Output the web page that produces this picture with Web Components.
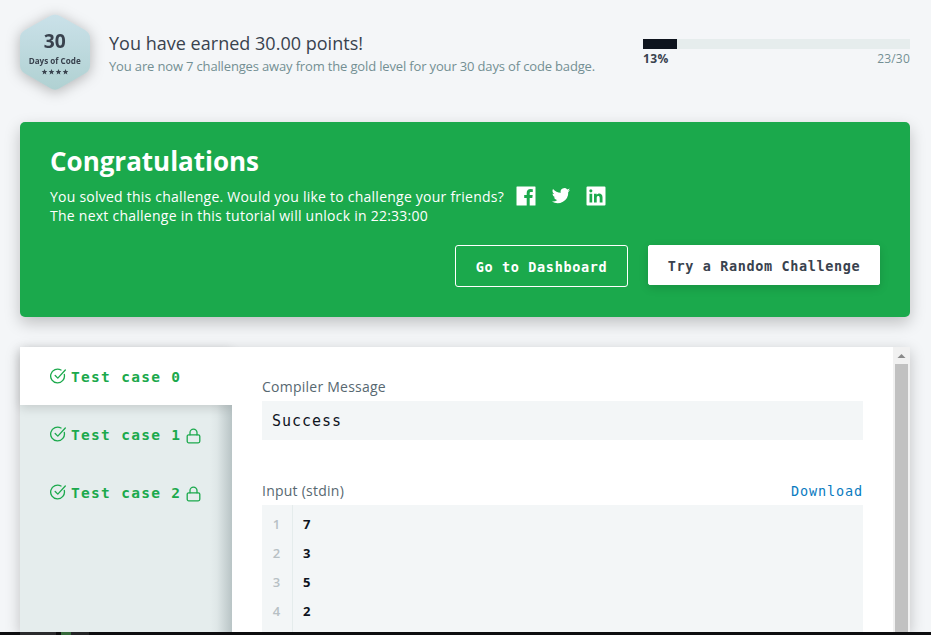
<!DOCTYPE html>
<html lang="en">
<head>
<meta charset="utf-8">
<title>Challenge result</title>
<style>
html, body { margin: 0; height: 635px; overflow: hidden; background: #f4f6f8; font-family: "Open Sans", sans-serif; }
</style>
</head>
<body>
<result-page></result-page>
<script>
const define = (name, html) => {
  const template = document.createElement('template');
  template.innerHTML = html;
  customElements.define(name, class extends HTMLElement {
    constructor() {
      super();
      this.attachShadow({ mode: 'open' }).append(template.content.cloneNode(true));
    }
  });
};

define('day-badge', `
<style>
:host { display: block; width: 70px; height: 80px; filter: drop-shadow(0 2px 7px rgba(0,0,0,.28)); }
svg { display: block; overflow: visible; }
text { font-family: "Open Sans", sans-serif; font-weight: 700; fill: #39424e; }
</style>
<svg width="70" height="80" viewBox="0 0 70 80">
  <defs><linearGradient id="g" x1="0" y1="0" x2="0" y2="1"><stop offset="0" stop-color="#cae1e9"/><stop offset="1" stop-color="#b0d1d2"/></linearGradient></defs>
  <path fill="url(#g)" d="M30 3Q35 0 40 3L65 17Q70 20 70 25V52.500Q70 57.500 65 60.500L40 75Q35 78.500 30 75L5 60.500Q0 57.500 0 52.500V25Q0 20 5 17Z"/>
  <text x="34.7" y="35" font-size="19" text-anchor="middle" textLength="22" lengthAdjust="spacingAndGlyphs">30</text>
  <text x="34.7" y="51" font-size="8.2" text-anchor="middle" textLength="52" lengthAdjust="spacingAndGlyphs">Days of Code</text>
  <defs><path id="s" fill="#39424e" d="M0-2.900L.85-.9L2.800-.9L1.300.4L1.800 2.400L0 1.300L-1.800 2.400L-1.300.4L-2.800-.9L-.85-.9Z"/></defs>
  <use href="#s" x="24.5" y="59"/><use href="#s" x="31.5" y="59"/><use href="#s" x="38.5" y="59"/><use href="#s" x="45.5" y="59"/>
</svg>`);

define('progress-meter', `
<style>
:host { display: block; width: 267px; }
.track { height: 10px; background: #e6eded; }
.fill { width: 34px; height: 10px; background: #0e141e; }
.labels { display: flex; justify-content: space-between; font-size: 12px; line-height: 19px; color: #738f93; letter-spacing: .2px; }
b { color: #39424e; letter-spacing: .35px; }
</style>
<div class="track"><div class="fill"></div></div>
<div class="labels"><b><slot name="percent"></slot></b><span><slot name="count"></slot></span></div>`);

define('badge-header', `
<style>
:host { display: flex; height: 122px; padding: 13px 21px 0 20px; box-sizing: border-box; }
.copy { flex: 1; padding: 18px 0 0 19px; white-space: nowrap; }
h2 { margin: 0; font-size: 18px; line-height: 25px; font-weight: 400; color: #39424e; letter-spacing: .02px; }
p { margin: 0; font-size: 13px; line-height: 20px; color: #738f93; letter-spacing: -.155px; }
progress-meter { margin-top: 26px; }
</style>
<day-badge></day-badge>
<div class="copy"><h2>You have earned 30.00 points!</h2><p>You are now 7 challenges away from the gold level for your 30 days of code badge.</p></div>
<progress-meter><span slot="percent">13%</span><span slot="count">23/30</span></progress-meter>`);

define('social-links', `
<style>
:host { display: inline-flex; gap: 15px; margin-left: 12px; height: 20px; align-items: center; margin-top: -1px; }
svg { display: block; width: 20px; height: 20px; fill: #fff; }
</style>
<svg viewBox="0 0 20 20"><path fill-rule="evenodd" d="M1 .5H19Q19.5.5 19.5 1V19Q19.5 19.5 19 19.5H13.700V12H16.300L16.700 9.100H13.700V7.300C13.700 6.400 14 5.900 15.200 5.900H16.800V3.200L14.500 3C12.200 3 10.700 4.400 10.700 6.900V9.100H8.200V12H10.700V19.500H1Q.5 19.500.5 19V1Q.5.5 1 .5Z"/></svg>
<svg viewBox="0 0 24 24"><path d="M23 4.800c-.8.4-1.700.6-2.600.7.9-.6 1.600-1.400 2-2.500-.9.5-1.800.9-2.900 1.100A4.500 4.500 0 0 0 11.700 8.200C8 8 4.700 6.200 2.400 3.500c-1.200 2.100-.6 4.700 1.400 6-.7 0-1.400-.2-2-.6 0 2.200 1.500 4.100 3.600 4.600-.7.2-1.400.2-2 .1.600 1.800 2.300 3.100 4.200 3.100A9.100 9.100 0 0 1 1 18.600 12.800 12.800 0 0 0 20.700 7.200c.9-.7 1.700-1.500 2.300-2.400z"/></svg>
<svg viewBox="0 0 20 20"><path fill-rule="evenodd" d="M1.500.5H18.500Q19.500.5 19.500 1.500V18.500Q19.500 19.500 18.500 19.500H1.500Q.5 19.500.5 18.500V1.500Q.5.5 1.500.5ZM3.500 7.700V16.500H6.200V7.700ZM4.850 3.300A1.550 1.550 0 1 0 4.850 6.400A1.550 1.550 0 1 0 4.850 3.300M8 7.700V16.500H10.700V12C10.700 9.500 13.700 9.400 13.700 12V16.500H16.500V11.300C16.500 7 12.100 6.600 10.700 9V7.700Z"/></svg>`);

define('action-button', `
<style>
:host { display: flex; box-sizing: border-box; height: 42px; align-items: center; justify-content: center; border: 1px solid #fff; border-radius: 3px; width: 173px; color: #fff; font: 700 13.5px/20px "DejaVu Sans Mono", monospace; letter-spacing: .63px; white-space: nowrap; padding-top: 1px; }
:host([primary]) { width: 232px; height: 40px; background: #fff; color: #39424e; box-shadow: 0 3px 10px rgba(0,0,0,.14); border-radius: 2px; }
</style><slot></slot>`);

define('success-banner', `
<style>
:host { display: block; height: 195px; margin: 0 21px 0 20px; padding: 23px 30px 0; box-sizing: border-box; border-radius: 5px; background: #1ba94c; color: #fff; box-shadow: 0 6px 16px rgba(0,0,0,.22); white-space: nowrap; }
h1 { margin: 0 0 11px; font-size: 26px; line-height: 32px; font-weight: 700; letter-spacing: -.02px; }
.line { display: flex; align-items: center; font-size: 14px; line-height: 19px; height: 19px; margin-top: -1px; letter-spacing: .235px; }
.next { margin-top: 0; letter-spacing: .25px; }
.actions { display: flex; justify-content: flex-end; gap: 20px; margin-top: 20px; }
</style>
<h1>Congratulations</h1>
<div class="line"><span>You solved this challenge. Would you like to challenge your friends?</span><social-links></social-links></div>
<div class="line next">The next challenge in this tutorial will unlock in 22:33:00</div>
<div class="actions"><action-button>Go to Dashboard</action-button><action-button primary>Try a Random Challenge</action-button></div>`);

define('test-tab', `
<style>
:host { display: flex; height: 58px; padding-left: 30px; align-items: center; box-sizing: border-box; color: #1ba94c; white-space: nowrap; font: 700 14.5px/20px "DejaVu Sans Mono", monospace; letter-spacing: 1.3px; }
:host([active]) { background: #fff; box-shadow: 0 3px 10px rgba(0,0,0,.14); }
svg { flex: none; fill: none; stroke: #1ba94c; stroke-width: 1.3; stroke-linecap: round; stroke-linejoin: round; }
.check { margin: 1px 4px 0 0; }
span { margin-top: 2px; }
.lock { display: none; margin: 4px 0 0 5px; }
:host([locked]) .lock { display: block; }
</style>
<svg class="check" width="17" height="17" viewBox="0 0 17 17"><path d="M14.300 6.500A6.900 6.900 0 1 1 11 2M5.200 7.500L7.800 10.100L15.300 2"/></svg>
<span><slot></slot></span>
<svg class="lock" width="16" height="16" viewBox="0 0 16 16"><rect x="1.200" y="6.800" width="12.600" height="8" rx="1.500"/><path d="M4 6.800V4.600A3.500 3.500 0 0 1 11 4.600V6.800"/></svg>`);

define('test-sidebar', `
<style>
:host { display: block; width: 212px; background: linear-gradient(90deg, transparent 190px, rgba(70,90,95,.04) 197px, rgba(70,90,95,.28)), #e5eded; }
</style><slot></slot>`);

define('code-listing', `
<style>
:host { display: grid; grid-template-columns: 31px 1fr; background: #f3f6f7; height: 140px; font: 600 13px/29px "Open Sans", sans-serif; }
.numbers { border-right: 1px solid #e5ecec; color: #b7c0c4; text-align: center; padding: 5px 1px 0 0; }
.values { padding: 5px 0 0 10px; color: #0e141e; font-weight: 700; }
</style>
<div class="numbers"><div>1</div><div>2</div><div>3</div><div>4</div></div>
<div class="values"><div>7</div><div>3</div><div>5</div><div>2</div></div>`);

define('test-detail', `
<style>
:host { display: block; flex: 1; padding: 30px 30px 0; background: #fff; color: #576871; font-size: 14px; line-height: 20px; letter-spacing: .24px; }
.message { height: 39px; box-sizing: border-box; margin: 4px 0 41px; padding: 10px; background: #f3f6f7; color: #0e141e; font: 15px/20px "DejaVu Sans Mono", monospace; letter-spacing: .97px; }
.row { display: flex; justify-content: space-between; height: 20px; margin-bottom: 4px; }
a { color: #097bbf; font: 13.5px/21px "DejaVu Sans Mono", monospace; letter-spacing: .88px; }
</style>
<div>Compiler Message</div><div class="message">Success</div>
<div class="row"><span>Input (stdin)</span><a>Download</a></div>
<code-listing></code-listing>`);

define('scroll-rail', `
<style>
:host { display: block; width: 17px; background: #f1f1f1; }
svg { display: block; width: 17px; height: 17px; fill: #8a8a8a; }
div { width: 13px; height: 268px; margin-left: 2px; background: #c1c1c1; }
</style><svg viewBox="0 0 17 17"><path d="M4.500 11L8.500 7L12.500 11Z"/></svg><div></div>`);

define('test-results', `
<style>
:host { display: flex; height: 285px; margin: 30px 21px 0 20px; box-shadow: 0 4px 14px rgba(0,0,0,.22); }
</style>
<test-sidebar><test-tab active>Test case 0</test-tab><test-tab locked>Test case 1</test-tab><test-tab locked>Test case 2</test-tab></test-sidebar>
<test-detail></test-detail><scroll-rail></scroll-rail>`);

define('desktop-edge', `
<style>
:host { display: flex; height: 3px; background: #0d0d0f; padding-left: 20px; position: relative; }
i { width: 36px; background: #2b2b2d; margin-right: 5px; }
i + i { width: 10px; background: #35693a; margin: 0; }
i + i + i { width: 18px; background: #242426; }
</style><i></i><i></i><i></i>`);

define('result-page', `
<style>
:host { display: block; height: 635px; overflow: hidden; }
</style>
<badge-header></badge-header><success-banner></success-banner><test-results></test-results><desktop-edge></desktop-edge>`);
</script>
</body>
</html>
